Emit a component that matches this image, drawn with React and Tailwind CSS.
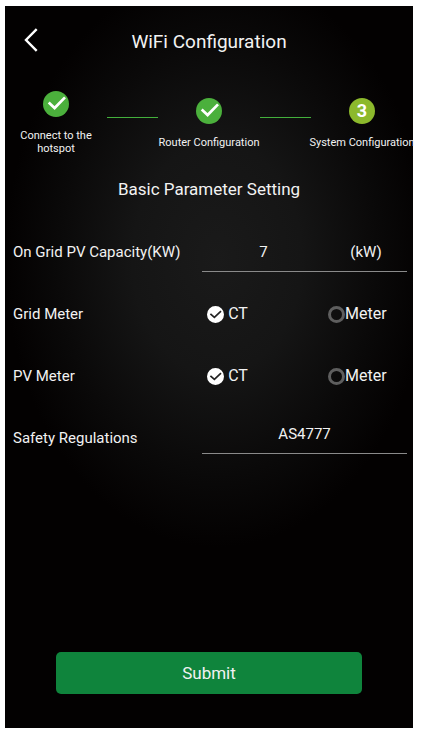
import React, { useState } from "react";

const steps = [
  { label: "Connect to the hotspot", done: true },
  { label: "Router Configuration", done: true },
  { label: "System Configuration", done: false },
];

const StepItem = ({ step, number }) => (
  <li className="flex flex-col items-center gap-3 flex-1 min-w-0">
    {step.done ? (
      <svg viewBox="0 0 26 26" className="size-[26px]">
        <circle cx="13" cy="13" r="13" fill="#4bb03c" />
        <path
          d="M5.7 11.6 L11.6 17 L22 6.4"
          fill="none"
          stroke="#fff"
          strokeWidth="2.7"
        />
      </svg>
    ) : (
      <span className="size-[26px] rounded-full bg-[#8cb92c] flex items-center justify-center font-bold text-lg leading-5 text-white">
        {number}
      </span>
    )}
    <span
      className={
        step.label.startsWith("Connect")
          ? "text-[11px] leading-[13px] text-center px-3"
          : "text-[11px] leading-[13px] text-center whitespace-nowrap"
      }
    >
      {step.label}
    </span>
  </li>
);

const RadioOption = ({ name, value, checked, onChange }) => (
  <label className="flex items-center text-base leading-5">
    <span className="grid size-[17px] shrink-0">
      <input
        type="radio"
        name={name}
        value={value}
        checked={checked}
        onChange={() => onChange(value)}
        className="appearance-none size-[17px] rounded-full border-3 border-[#5e5e5e] checked:border-white checked:bg-white col-start-1 row-start-1"
      />
      {checked && (
        <svg
          viewBox="0 0 17 17"
          className="size-[17px] col-start-1 row-start-1 pointer-events-none"
        >
          <path
            d="M3.4 7.8 L7.4 11.4 L14 5.2"
            fill="none"
            stroke="#222"
            strokeWidth="1.7"
          />
        </svg>
      )}
    </span>
    <span className={checked ? "pl-1" : ""}>{value}</span>
  </label>
);

const MeterRow = ({ title, name }) => {
  const [selected, setSelected] = useState("CT");

  return (
    <div
      role="radiogroup"
      aria-labelledby={name}
      className="flex items-center h-[62px]"
    >
      <span id={name} className="flex-1">
        {title}
      </span>
      <div className="w-[52%] flex">
        <div className="w-3/5 pl-[5px]">
          <RadioOption
            name={name}
            value="CT"
            checked={selected === "CT"}
            onChange={setSelected}
          />
        </div>
        <div className="w-2/5 pl-[3px]">
          <RadioOption
            name={name}
            value="Meter"
            checked={selected === "Meter"}
            onChange={setSelected}
          />
        </div>
      </div>
    </div>
  );
};

const App = () => {
  const [capacity, setCapacity] = useState("7");

  return (
    <div className="min-h-screen flex flex-col bg-white pt-[6px] pb-[5px] pl-[5px] pr-[10px] font-['Roboto',sans-serif]">
      <main className="flex-1 flex flex-col text-[#f2f2f2] text-[15px] leading-5 bg-[#030101] bg-[radial-gradient(ellipse_52%_40%_at_52%_35%,#1a1a1a_0%,#151515_40%,#0a0909_75%,#030101_100%)]">
        {/* Header */}
        <header className="grid grid-cols-[52px_1fr_52px] items-center h-[72px]">
          <button type="button" aria-label="Back" className="pl-[19px] pb-1">
            <svg viewBox="0 0 14 24" className="w-[14px] h-6">
              <path
                d="M12.7 1.2 L2 12 L12.7 22.8"
                fill="none"
                stroke="#fff"
                strokeWidth="2.4"
              />
            </svg>
          </button>
          <h1 className="text-center text-[19px] leading-6">
            WiFi Configuration
          </h1>
        </header>

        {/* Steps */}
        <ol className="flex items-center mt-[13px]">
          {steps.map((step, index) => (
            <React.Fragment key={step.label}>
              {index > 0 && (
                <li aria-hidden="true" className="w-1/8 h-3">
                  <div className="h-px bg-[#43b03c]" />
                </li>
              )}
              <StepItem step={step} number={index + 1} />
            </React.Fragment>
          ))}
        </ol>

        <h2 className="text-center text-[17px] leading-6 mt-[22px] mb-5">
          Basic Parameter Setting
        </h2>

        {/* Parameters */}
        <form className="flex-1 flex flex-col">
          <div className="pl-2 pr-[6px]">
            <div className="flex items-center h-[62px]">
              <label htmlFor="capacity" className="flex-1">
                On Grid PV Capacity(KW)
              </label>
              <div className="w-[52%] h-10 flex items-center border-b border-[#8a8a8a]">
                <input
                  id="capacity"
                  type="text"
                  value={capacity}
                  onChange={(e) => setCapacity(e.target.value)}
                  className="w-3/5 text-center focus:outline-none"
                />
                <span className="w-2/5 text-center">(kW)</span>
              </div>
            </div>

            <MeterRow title="Grid Meter" name="grid-meter" />
            <MeterRow title="PV Meter" name="pv-meter" />

            <div className="flex items-center h-[62px]">
              <label htmlFor="safety" className="flex-1">
                Safety Regulations
              </label>
              <select
                id="safety"
                className="appearance-none w-[52%] h-8 pb-2 border-b border-[#8a8a8a] text-[15px] leading-5 text-center [text-align-last:center] focus:outline-none"
              >
                <option>AS4777</option>
              </select>
            </div>
          </div>

          <button
            type="button"
            className="mt-auto mb-[34px] mx-auto w-3/4 h-[42px] rounded-[5px] bg-[#0f843c] text-[17px]"
          >
            Submit
          </button>
        </form>
      </main>
    </div>
  );
};

export default App;
